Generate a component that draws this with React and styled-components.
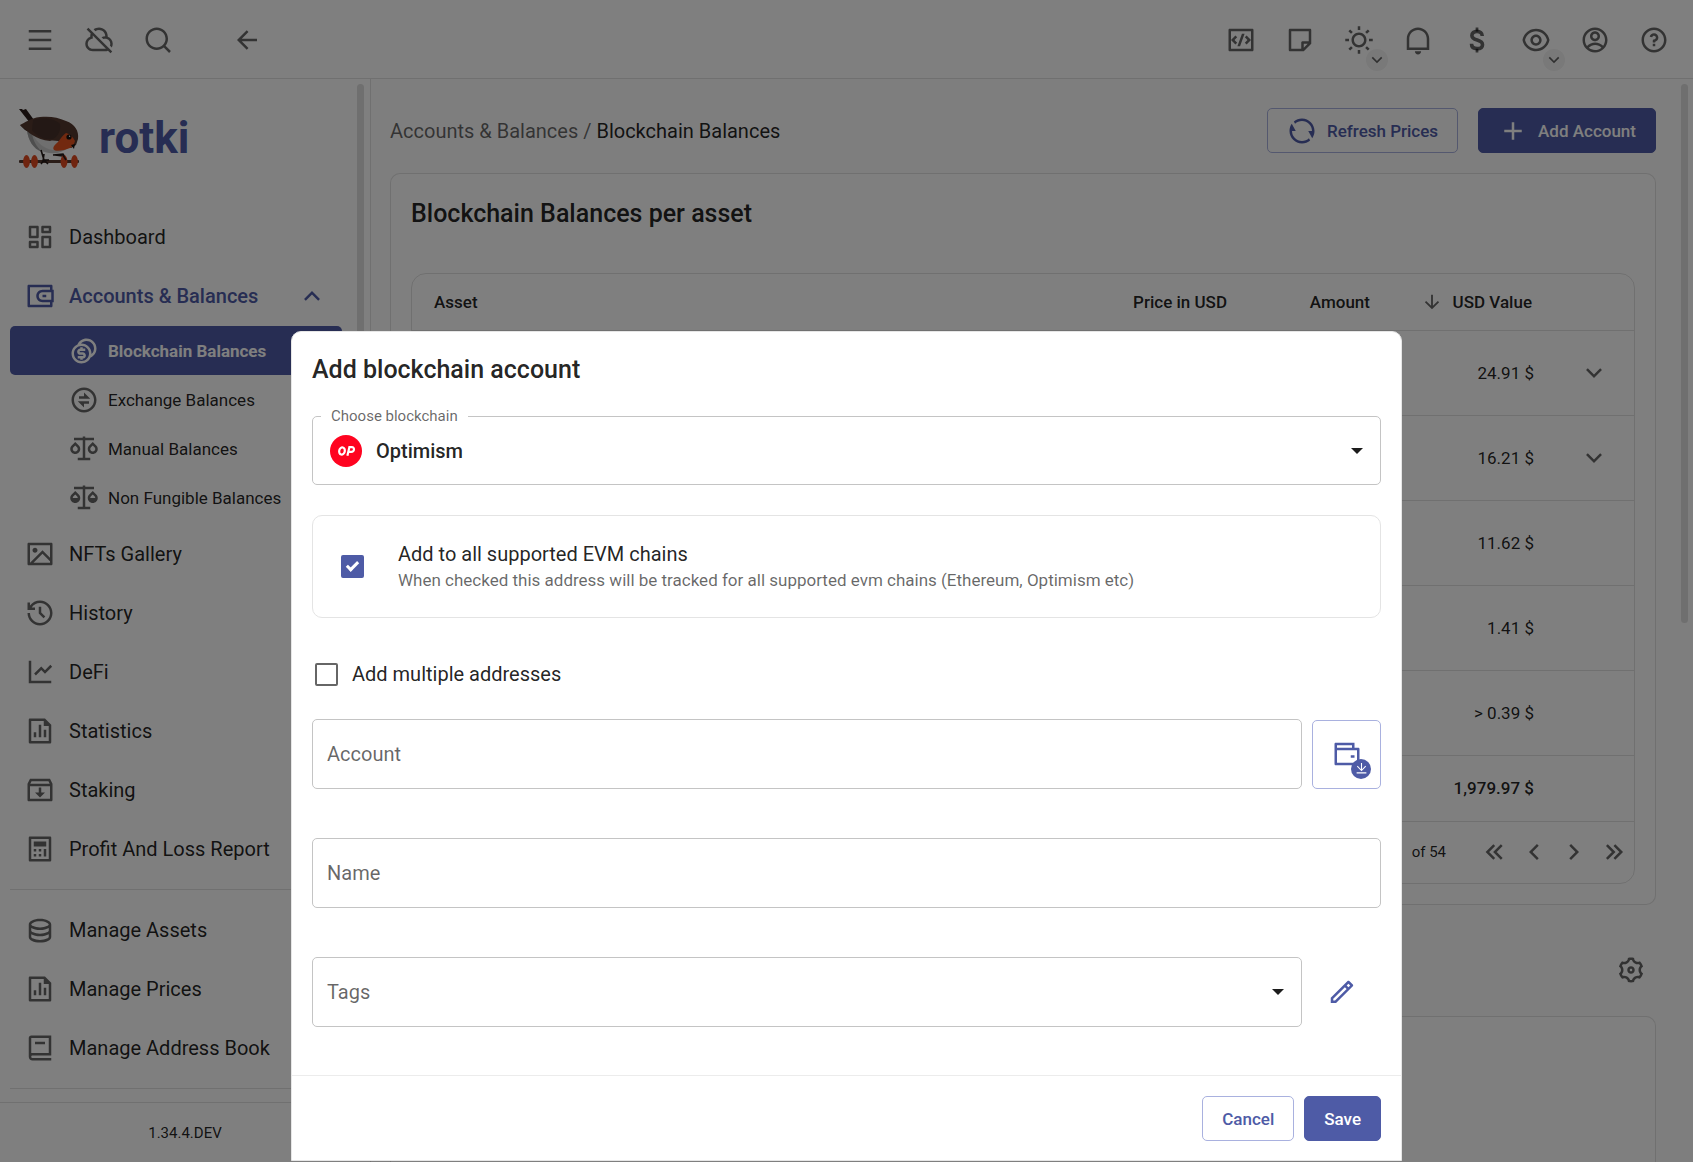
import React, { useState } from 'react';
import styled, { createGlobalStyle, css } from 'styled-components';
import {
  RiMenuLine, RiCloudOffLine, RiSearchLine, RiArrowLeftLine, RiCodeBoxLine, RiStickyNoteLine,
  RiSunLine, RiNotificationLine, RiEyeLine, RiAccountCircleLine, RiQuestionLine, RiDashboardLine,
  RiWallet3Line, RiCoinsLine, RiExchangeLine, RiScalesLine, RiScalesFill, RiImageLine,
  RiHistoryLine, RiLineChartLine, RiFileChartLine, RiInboxArchiveLine, RiCalculatorLine,
  RiDatabase2Line, RiBook2Line, RiAddLine, RiRefreshLine, RiArrowDownLine, RiArrowDownSLine,
  RiArrowUpSLine, RiArrowLeftSLine, RiArrowRightSLine, RiSettings3Line, RiPencilLine,
  RiWalletLine, RiDownloadLine,
} from 'react-icons/ri';

const color = {
  primary: '#4e5ba6',
  primaryBorder: '#a9b1df',
  text: 'rgba(0, 0, 0, 0.87)',
  soft: 'rgba(0, 0, 0, 0.6)',
  line: 'rgba(0, 0, 0, 0.12)',
  field: '#c4c4c4',
};

const GlobalStyle = createGlobalStyle`
  *, *::before, *::after { box-sizing: border-box; }
  body {
    margin: 0;
    font-family: Roboto, "Liberation Sans", sans-serif;
    font-size: 20px;
    line-height: 30px;
    color: ${color.text};
    background: #fff;
  }
  button, input, select { font: inherit; color: inherit; }
  button { cursor: pointer; }
  svg { display: block; flex: none; }
`;

const Shell = styled.div`
  display: flex;
  flex-direction: column;
  height: 100vh;
  overflow: hidden;
`;

const TopBar = styled.header`
  display: flex;
  justify-content: space-between;
  flex: none;
  height: 79px;
  padding: 1px 10px 0;
  border-bottom: 1px solid ${color.line};
`;

const Group = styled.div`
  display: flex;
  align-items: center;
`;

const IconButton = styled.button`
  position: relative;
  display: flex;
  align-items: center;
  justify-content: center;
  width: ${(p) => p.$size || 59}px;
  height: ${(p) => p.$size || 59}px;
  padding: 0;
  border: 0;
  border-radius: 50%;
  background: none;
  color: ${(p) => (p.$primary ? color.primary : color.soft)};
`;

const BackButton = styled(IconButton)`
  margin-left: 30px;
`;

const MoreBadge = styled.span`
  position: absolute;
  right: 0;
  bottom: -2px;
  display: flex;
  align-items: center;
  justify-content: center;
  width: 22px;
  height: 22px;
  border-radius: 50%;
  background: #f2f2f2;
`;

const Body = styled.div`
  display: flex;
  flex: 1;
  min-height: 0;
`;

const Sidebar = styled.aside`
  display: flex;
  flex-direction: column;
  flex: none;
  width: 371px;
  border-right: 1px solid ${color.line};
`;

const SidebarBody = styled.div`
  display: flex;
  flex: 1;
  min-height: 0;
  overflow: hidden;
`;

const Nav = styled.nav`
  flex: 1;
  padding: 0 15px 0 10px;
`;

const Brand = styled.div`
  display: flex;
  align-items: center;
  gap: 20px;
  height: 118px;
  margin-bottom: 10px;
  padding-left: 9px;
  color: ${color.primary};
  font-size: 44px;
  font-weight: 700;
`;

const NavItem = styled.a`
  display: flex;
  align-items: center;
  gap: 14px;
  height: 59px;
  padding: 0 15px;
  border-radius: 5px;
  color: ${color.text};
  text-decoration: none;
  white-space: nowrap;
  > svg { color: ${color.soft}; }
  ${(p) => p.$open && css`
    color: ${color.primary};
    font-weight: 500;
    > svg { color: inherit; }
  `}
`;

const NavLabel = styled.span`
  flex: 1;
`;

const SubNav = styled.div`
  padding: 1px 0 2px;
`;

const SubItem = styled(NavItem)`
  gap: 9px;
  height: 49px;
  padding-left: 59px;
  font-size: 17px;
  ${(p) => p.$active && css`
    background: ${color.primary};
    color: #fff;
    font-weight: 700;
    > svg { color: inherit; }
  `}
`;

const Divider = styled.hr`
  height: 1px;
  margin: 11px 0 10px;
  border: 0;
  background: ${color.line};
`;

const ScrollTrack = styled.div`
  flex: none;
  width: 7px;
  margin: 5px ${(p) => p.$right}px 0 0;
`;

const ScrollThumb = styled.div`
  width: 7px;
  height: ${(p) => p.$share}%;
  border-radius: 4px;
  background: #dedede;
`;

const Version = styled.footer`
  flex: none;
  height: 60px;
  border-top: 1px solid ${color.line};
  font-size: 15px;
  line-height: 60px;
  text-align: center;
`;

const Main = styled.main`
  display: flex;
  flex: 1;
  min-width: 0;
  background: #fcfcfc;
`;

const Content = styled.div`
  flex: 1;
  min-width: 0;
  padding: 29px 25px 0 19px;
`;

const PageHead = styled.div`
  display: flex;
  align-items: center;
  justify-content: space-between;
  margin-bottom: 20px;
`;

const Crumbs = styled.div`
  color: ${color.text};
  a { color: ${color.soft}; text-decoration: none; }
  span { color: ${color.soft}; }
`;

const Actions = styled.div`
  display: flex;
  gap: 20px;
`;

const Button = styled.button`
  display: flex;
  align-items: center;
  gap: 10px;
  height: 45px;
  padding: 0 19px;
  border: 1px solid ${(p) => (p.$solid ? color.primary : color.primaryBorder)};
  border-radius: 5px;
  background: ${(p) => (p.$solid ? color.primary : 'transparent')};
  color: ${(p) => (p.$solid ? '#fff' : color.primary)};
  font-size: 17px;
  font-weight: 500;
`;

const Card = styled.section`
  padding: 24px 20px 20px;
  border: 1px solid ${color.line};
  border-radius: 10px;
  background: #fff;
`;

const Heading = styled.h2`
  margin: 0;
  font-size: 25px;
  line-height: 32px;
  font-weight: 500;
`;

const TableBox = styled.div`
  margin-top: 43px;
  border: 1px solid ${color.line};
  border-radius: 15px;
`;

const Table = styled.table`
  width: 100%;
  border-collapse: collapse;
  table-layout: fixed;
  font-size: 17px;
`;

const HeadCell = styled.th`
  width: ${(p) => (p.$width ? `${p.$width}px` : 'auto')};
  height: 56px;
  padding: 0 22px;
  border-bottom: 1px solid ${color.line};
  font-weight: 500;
  text-align: ${(p) => p.$align || 'right'};
  white-space: nowrap;
`;

const SortButton = styled.button`
  display: flex;
  align-items: center;
  justify-content: flex-end;
  gap: 10px;
  width: 100%;
  padding: 0;
  border: 0;
  background: none;
  font-weight: 500;
  svg { color: ${color.soft}; }
`;

const Cell = styled.td`
  height: ${(p) => (p.$total ? 66 : 85)}px;
  padding: 0 ${(p) => (p.$tight ? 0 : 20)}px;
  border-bottom: 1px solid ${color.line};
  font-weight: ${(p) => (p.$total ? 500 : 400)};
  text-align: right;
  white-space: nowrap;
`;

const Expand = styled(IconButton)`
  margin: 0 auto;
`;

const Pager = styled.div`
  display: flex;
  align-items: center;
  justify-content: flex-end;
  height: 61px;
  font-size: 15px;
`;

const PagerText = styled.span`
  margin-right: 28px;
`;

const SettingsRow = styled.div`
  display: flex;
  align-items: center;
  justify-content: flex-end;
  height: 111px;
  padding: 19px 10px 0;
`;

const NextCard = styled(Card)`
  height: 400px;
`;

const Overlay = styled.div`
  position: fixed;
  inset: 0;
  display: flex;
  align-items: flex-end;
  justify-content: center;
  padding-bottom: 1px;
  background: rgba(0, 0, 0, 0.5);
`;

const Dialog = styled.form`
  width: 100%;
  max-width: 1111px;
  border: 1px solid #e6e6e6;
  border-radius: 10px 10px 0 0;
  background: #fff;
`;

const DialogBody = styled.div`
  padding: 22px 20px 48px;
`;

const ChainField = styled.fieldset`
  min-width: 0;
  height: 78px;
  margin: 21px 0 30px;
  padding: 0 16px 0 8px;
  border: 1px solid ${color.field};
  border-radius: 5px;
`;

const Legend = styled.legend`
  padding: 0 10px;
  font-size: 15px;
  line-height: 18px;
  color: ${color.soft};
`;

const ChainRow = styled.div`
  display: flex;
  align-items: center;
  gap: 14px;
  width: 100%;
  height: 52px;
  padding-left: 9px;
`;

const Select = styled.select`
  flex: 1;
  min-width: 0;
  height: 52px;
  padding: 0;
  border: 0;
  outline: 0;
  appearance: none;
  background: none;
  font-weight: ${(p) => (p.$strong ? 500 : 400)};
  color: ${(p) => (p.$strong ? color.text : color.soft)};
`;

const EvmBox = styled.div`
  display: flex;
  align-items: center;
  gap: 34px;
  height: 103px;
  padding: 0 28px;
  border: 1px solid #e4e4e4;
  border-radius: 10px;
`;

const Check = styled.input`
  display: grid;
  place-content: center;
  flex: none;
  width: 23px;
  height: 23px;
  margin: 0;
  appearance: none;
  border: 2px solid ${color.soft};
  border-radius: 2px;
  &:checked {
    border-color: ${color.primary};
    background: ${color.primary};
  }
  &:checked::after {
    content: "";
    width: 7px;
    height: 12px;
    margin-bottom: 4px;
    border: solid #fff;
    border-width: 0 3px 3px 0;
    transform: rotate(45deg);
  }
`;

const EvmLabel = styled.label`
  display: block;
  line-height: 28px;
`;

const Hint = styled.div`
  font-size: 17px;
  line-height: 25px;
  color: ${color.soft};
`;

const MultiRow = styled.label`
  display: flex;
  align-items: center;
  gap: 14px;
  margin: 41px 0 30px;
  padding-left: 3px;
`;

const FieldRow = styled.div`
  display: flex;
  align-items: center;
  gap: 10px;
`;

const Input = styled.input`
  flex: 1;
  min-width: 0;
  width: 100%;
  height: 70px;
  padding: 0 14px;
  border: 1px solid ${color.field};
  border-radius: 5px;
  background: #fff;
  &::placeholder { color: ${color.soft}; opacity: 1; }
`;

const Fields = styled.div`
  display: flex;
  flex-direction: column;
  gap: 49px;
`;

const TagBox = styled.div`
  display: flex;
  align-items: center;
  flex: 1;
  min-width: 0;
  height: 70px;
  padding: 0 16px 0 14px;
  border: 1px solid ${color.field};
  border-radius: 5px;
`;

const ImportButton = styled.button`
  position: relative;
  display: flex;
  align-items: center;
  justify-content: center;
  width: 69px;
  height: 69px;
  padding: 0;
  border: 1px solid ${color.primaryBorder};
  border-radius: 5px;
  background: #fff;
  color: ${color.primary};
`;

const ImportBadge = styled.span`
  position: absolute;
  right: 9px;
  bottom: 9px;
  display: flex;
  align-items: center;
  justify-content: center;
  width: 20px;
  height: 20px;
  border-radius: 50%;
  background: ${color.primary};
  color: #fff;
`;

const EditSlot = styled.div`
  display: flex;
  width: 69px;
`;

const DialogFoot = styled.div`
  display: flex;
  justify-content: flex-end;
  gap: 10px;
  padding: 20px 20px 19px;
  border-top: 1px solid #ececec;
`;

function RobinLogo() {
  return (
    <svg width="60" height="60" viewBox="0 0 60 60" aria-hidden="true">
      <path d="M0 1l3 0 1 1 3-1 8 11-4 3z" fill="#2a1d1a" />
      <path d="M1 17l5 5 4 2-2-5z" fill="#2a1d1a" />
      <path d="M8 20c0 12 8 23 22 25 8 1 14-1 19-5l-2-18-20-8z" fill="#c9c9c9" />
      <path d="M14 26c4 9 11 15 20 16 5 0 9-2 12-5L40 24z" fill="#dedede" />
      <path d="M8 22c1 10 6 19 15 22-5-5-9-11-10-19z" fill="#9d9d9d" />
      <path d="M1 17c5-2 10-7 20-8 9-1 18 0 26 4 9 3 13 10 12 18l-2 6-5 3-13-7c-3 0-5-1-8 0-14-1-22-9-30-16z" fill="#54382f" />
      <path d="M14 12c9-3 21-2 27 4 1 5-1 12-7 15-10 2-18-5-21-9z" fill="#46302a" />
      <path d="M47 25c-3 2-5 5-8 9-3 3-6 5-4 8 4 2 11 0 16-2 3-1 4-4 5-7-2-4-5-7-9-8z" fill="#e4521f" />
      <circle cx="50" cy="29" r="2.6" fill="#15100f" />
      <circle cx="50.6" cy="28.2" r="0.7" fill="#fff" />
      <path d="M52 37l4-1-1 5z" fill="#15100f" />
      <rect x="0" y="52" width="60" height="3" rx="1" fill="#543a31" />
      <path d="M22 42l3 10M25 46l-1 7m-2 3l3-4 4 4m-4-4l5 0M34 47l10-1 3 5m-11-4l8 1" fill="none" stroke="#241a18" strokeWidth="1.6" />
      <ellipse cx="7.5" cy="53.5" rx="3.4" ry="6.5" fill="#e04a20" />
      <ellipse cx="15.5" cy="53.5" rx="3.4" ry="6.5" fill="#e04a20" />
      <ellipse cx="45" cy="53.5" rx="3.4" ry="6.5" fill="#e04a20" />
      <ellipse cx="55.5" cy="53.5" rx="3.4" ry="6.5" fill="#e04a20" />
      <path d="M44 47l3 5" stroke="#241a18" strokeWidth="1.6" />
    </svg>
  );
}

function OptimismLogo() {
  return (
    <svg width="32" height="32" viewBox="0 0 32 32" aria-hidden="true">
      <circle cx="16" cy="16" r="16" fill="#ff0420" />
      <g fill="none" stroke="#fff" strokeWidth="2.2">
        <ellipse cx="12" cy="16" rx="2.8" ry="3.6" transform="rotate(14 12 16)" />
        <path d="M17.400 20.800l2-8.700h2.400c3.200 0 2.800 4.800-.6 4.800h-2.400" />
      </g>
    </svg>
  );
}

function Caret() {
  return (
    <svg width="14" height="8" viewBox="0 0 14 8" aria-hidden="true">
      <path d="M1 1h12L7 7z" fill="#1c1c1c" />
    </svg>
  );
}

function DollarIcon() {
  return (
    <svg width="30" height="30" viewBox="0 0 24 24" fill="none" stroke="currentColor" strokeWidth="2.9" aria-hidden="true">
      <path d="M16.200 8.800c0-2.300-1.700-3.700-4.200-3.700-2.400 0-4.100 1.300-4.100 3.300 0 4.700 8.500 2.600 8.500 7.300 0 2-1.700 3.200-4.300 3.200-2.700 0-4.500-1.400-4.500-3.900" />
      <path d="M12 2v3.200M12 19v3" strokeWidth="2.2" />
    </svg>
  );
}

function DoubleChevron({ flip }) {
  return (
    <svg width="30" height="30" viewBox="0 0 24 24" fill="none" stroke="currentColor" strokeWidth="2" aria-hidden="true">
      <path d={flip ? 'M6.300 6.500l5.500 5.500-5.500 5.500M12.300 6.500l5.500 5.500-5.500 5.500' : 'M12.200 6.500L6.700 12l5.500 5.500M18.200 6.500L12.700 12l5.500 5.500'} />
    </svg>
  );
}

const primaryNav = [
  ['NFTs Gallery', RiImageLine],
  ['History', RiHistoryLine],
  ['DeFi', RiLineChartLine],
  ['Statistics', RiFileChartLine],
  ['Staking', RiInboxArchiveLine],
  ['Profit And Loss Report', RiCalculatorLine],
];
const balanceNav = [
  ['Blockchain Balances', RiCoinsLine],
  ['Exchange Balances', RiExchangeLine],
  ['Manual Balances', RiScalesLine],
  ['Non Fungible Balances', RiScalesFill],
];
const manageNav = [
  ['Manage Assets', RiDatabase2Line],
  ['Manage Prices', RiFileChartLine],
  ['Manage Address Book', RiBook2Line],
];
const tools = [
  ['Developer tools', RiCodeBoxLine],
  ['Notes', RiStickyNoteLine],
  ['Theme', RiSunLine, true],
  ['Notifications', RiNotificationLine],
  ['Currency', DollarIcon],
  ['Privacy', RiEyeLine, true],
  ['Account', RiAccountCircleLine],
  ['Help', RiQuestionLine],
];
const balances = [
  ['24.91 $', true],
  ['16.21 $', true],
  ['11.62 $', false],
  ['1.41 $', false],
  ['> 0.39 $', false],
];

function NavList({ items }) {
  return items.map(([label, Icon]) => (
    <NavItem href="#" key={label}>
      <Icon size={30} />
      <NavLabel>{label}</NavLabel>
    </NavItem>
  ));
}

function SideMenu() {
  return (
    <Sidebar>
      <SidebarBody>
        <Nav>
          <Brand><RobinLogo />rotki</Brand>
          <NavList items={[['Dashboard', RiDashboardLine]]} />
          <NavItem href="#" $open>
            <RiWallet3Line size={30} />
            <NavLabel>Accounts &amp; Balances</NavLabel>
            <RiArrowUpSLine size={30} />
          </NavItem>
          <SubNav>
            {balanceNav.map(([label, Icon], i) => (
              <SubItem href="#" key={label} $active={i === 0}>
                <Icon size={30} />
                <NavLabel>{label}</NavLabel>
              </SubItem>
            ))}
          </SubNav>
          <NavList items={primaryNav} />
          <Divider />
          <NavList items={manageNav} />
          <Divider />
        </Nav>
        <ScrollTrack $right={6}><ScrollThumb $share={80} /></ScrollTrack>
      </SidebarBody>
      <Version>1.34.4.DEV</Version>
    </Sidebar>
  );
}

function BalancesTable() {
  return (
    <TableBox>
      <Table>
        <thead>
          <tr>
            <HeadCell $align="left">Asset</HeadCell>
            <HeadCell $width={180}>Price in USD</HeadCell>
            <HeadCell $width={143}>Amount</HeadCell>
            <HeadCell $width={162}>
              <SortButton type="button"><RiArrowDownLine size={22} />USD Value</SortButton>
            </HeadCell>
            <HeadCell $width={80} />
          </tr>
        </thead>
        <tbody>
          {balances.map(([value, expandable]) => (
            <tr key={value}>
              <Cell colSpan={3} />
              <Cell>{value}</Cell>
              <Cell $tight>
                {expandable && (
                  <Expand type="button" $size={40} aria-label="Expand row"><RiArrowDownSLine size={30} /></Expand>
                )}
              </Cell>
            </tr>
          ))}
        </tbody>
        <tfoot>
          <tr>
            <Cell $total colSpan={3} />
            <Cell $total>1,979.97 $</Cell>
            <Cell $total />
          </tr>
        </tfoot>
      </Table>
      <Pager>
        <PagerText>of 54</PagerText>
        <IconButton $size={40} aria-label="First page"><DoubleChevron /></IconButton>
        <IconButton $size={40} aria-label="Previous page"><RiArrowLeftSLine size={30} /></IconButton>
        <IconButton $size={40} aria-label="Next page"><RiArrowRightSLine size={30} /></IconButton>
        <IconButton $size={40} aria-label="Last page"><DoubleChevron flip /></IconButton>
      </Pager>
    </TableBox>
  );
}

function AddAccountDialog() {
  const [allChains, setAllChains] = useState(true);
  const [multiple, setMultiple] = useState(false);
  return (
    <Overlay>
      <Dialog role="dialog" aria-labelledby="dialog-title" onSubmit={(e) => e.preventDefault()}>
        <DialogBody>
          <Heading id="dialog-title">Add blockchain account</Heading>
          <ChainField>
            <Legend><label htmlFor="chain">Choose blockchain</label></Legend>
            <ChainRow>
              <OptimismLogo />
              <Select id="chain" $strong defaultValue="Optimism"><option>Optimism</option></Select>
              <Caret />
            </ChainRow>
          </ChainField>
          <EvmBox>
            <Check type="checkbox" id="evm" checked={allChains} onChange={(e) => setAllChains(e.target.checked)} />
            <div>
              <EvmLabel htmlFor="evm">Add to all supported EVM chains</EvmLabel>
              <Hint>When checked this address will be tracked for all supported evm chains (Ethereum, Optimism etc)</Hint>
            </div>
          </EvmBox>
          <MultiRow>
            <Check type="checkbox" checked={multiple} onChange={(e) => setMultiple(e.target.checked)} />
            Add multiple addresses
          </MultiRow>
          <Fields>
            <FieldRow>
              <Input placeholder="Account" aria-label="Account" />
              <ImportButton type="button" aria-label="Import from wallet">
                <RiWalletLine size={30} />
                <ImportBadge><RiDownloadLine size={13} /></ImportBadge>
              </ImportButton>
            </FieldRow>
            <FieldRow><Input placeholder="Name" aria-label="Name" /></FieldRow>
            <FieldRow>
              <TagBox>
                <Select aria-label="Tags" defaultValue="Tags"><option>Tags</option></Select>
                <Caret />
              </TagBox>
              <EditSlot>
                <IconButton type="button" $primary aria-label="Manage tags"><RiPencilLine size={30} /></IconButton>
              </EditSlot>
            </FieldRow>
          </Fields>
        </DialogBody>
        <DialogFoot>
          <Button type="button">Cancel</Button>
          <Button type="submit" $solid>Save</Button>
        </DialogFoot>
      </Dialog>
    </Overlay>
  );
}

export default function App() {
  return (
    <>
      <GlobalStyle />
      <Shell>
        <TopBar>
          <Group>
            <IconButton aria-label="Menu"><RiMenuLine size={30} /></IconButton>
            <IconButton aria-label="Sync"><RiCloudOffLine size={30} /></IconButton>
            <IconButton aria-label="Search"><RiSearchLine size={30} /></IconButton>
            <BackButton aria-label="Back"><RiArrowLeftLine size={30} /></BackButton>
          </Group>
          <Group>
            {tools.map(([label, Icon, more]) => (
              <IconButton key={label} aria-label={label}>
                <Icon size={30} />
                {more && <MoreBadge><RiArrowDownSLine size={20} /></MoreBadge>}
              </IconButton>
            ))}
          </Group>
        </TopBar>
        <Body>
          <SideMenu />
          <Main>
            <Content>
              <PageHead>
                <Crumbs><a href="#">Accounts &amp; Balances</a> <span>/</span> Blockchain Balances</Crumbs>
                <Actions>
                  <Button type="button"><RiRefreshLine size={30} />Refresh Prices</Button>
                  <Button type="button" $solid><RiAddLine size={30} />Add Account</Button>
                </Actions>
              </PageHead>
              <Card>
                <Heading>Blockchain Balances per asset</Heading>
                <BalancesTable />
              </Card>
              <SettingsRow>
                <IconButton $size={30} aria-label="Table settings"><RiSettings3Line size={30} /></IconButton>
              </SettingsRow>
              <NextCard />
            </Content>
            <ScrollTrack $right={5}><ScrollThumb $share={50} /></ScrollTrack>
          </Main>
        </Body>
      </Shell>
      <AddAccountDialog />
    </>
  );
}
